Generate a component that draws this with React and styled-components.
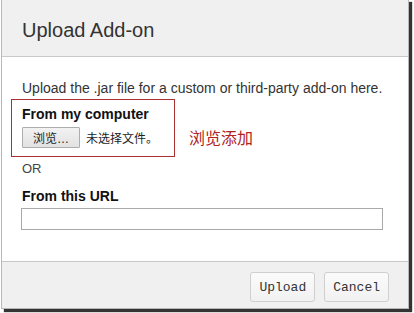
import React from "react";
import styled, { createGlobalStyle } from "styled-components";

const GlobalStyle = createGlobalStyle`
  html, body {
    margin: 0;
    padding: 0;
    background: #ffffff;
  }
  body {
    font-family: "Liberation Sans", Arial, sans-serif;
  }
`;

const App = () => {
  return (
    <>
      <GlobalStyle />
      <Page>
        <Dialog>
          <Header>
            <Title>Upload Add-on</Title>
          </Header>
          <Body>
            <Intro>Upload the .jar file for a custom or third-party add-on here.</Intro>
            <PickRow>
              <Marked>
                <FieldLabel>From my computer</FieldLabel>
                <FileRow>
                  <BrowseBtn type="button">浏览…</BrowseBtn>
                  <FileName>未选择文件。</FileName>
                </FileRow>
              </Marked>
              <Note>浏览添加</Note>
            </PickRow>
            <OrText>OR</OrText>
            <FieldLabel $gap>From this URL</FieldLabel>
            <UrlInput type="text" />
          </Body>
          <Footer>
            <ActionBtn type="button">Upload</ActionBtn>
            <ActionBtn type="button">Cancel</ActionBtn>
          </Footer>
        </Dialog>
      </Page>
    </>
  );
};

export default App;

const Page = styled.div`
  width: 414px;
  height: 313px;
  padding-left: 1px;
  box-sizing: border-box;
  overflow: hidden;
`;

const Dialog = styled.div`
  width: 408px;
  height: 310px;
  margin-top: -1px;
  box-sizing: border-box;
  border: 1px solid #b8b8b8;
  background: #f0f0f0;
  box-shadow: 3px 3px 1px rgba(0, 0, 0, 0.8);
  display: flex;
  flex-direction: column;
`;

const Header = styled.div`
  height: 57px;
  flex: none;
  display: flex;
  align-items: center;
  padding: 4px 0 0 20px;
  box-sizing: border-box;
  background: #f0f0f0;
  border-bottom: 1px solid #c8c8c8;
`;

const Title = styled.h3`
  margin: 0;
  font-size: 20px;
  font-weight: normal;
  color: #333;
`;

const Body = styled.div`
  flex: 1;
  background: #ffffff;
  padding: 23px 0 0 20px;
  display: flex;
  flex-direction: column;
  align-items: flex-start;
  color: #333;
`;

const Intro = styled.p`
  margin: 0;
  font-size: 14px;
  line-height: 17px;
`;

const PickRow = styled.div`
  display: flex;
  align-items: center;
  margin: 2px 0 0 -11px;
`;

const Marked = styled.div`
  width: 164px;
  height: 58px;
  box-sizing: border-box;
  border: 1px solid #a83232;
  padding: 5px 0 0 10px;
`;

const FieldLabel = styled.div`
  margin-top: ${(p) => (p.$gap ? "10px" : "0")};
  font-size: 14px;
  font-weight: bold;
  color: #111;
  line-height: 18px;
`;

const FileRow = styled.div`
  display: flex;
  align-items: center;
  gap: 6px;
  margin-top: 4px;
`;

const BrowseBtn = styled.button`
  width: 58px;
  height: 21px;
  padding: 0;
  border: 1px solid #adadad;
  border-radius: 1px;
  background: linear-gradient(#f2f2f2, #e2e2e2);
  font-family: "Liberation Sans", "Noto Sans CJK SC", sans-serif;
  font-size: 12px;
  color: #222;
`;

const FileName = styled.span`
  font-family: "Liberation Sans", "Noto Sans CJK SC", sans-serif;
  font-size: 12px;
  color: #222;
`;

const Note = styled.span`
  margin-left: 14px;
  margin-top: 18px;
  font-family: "Noto Sans CJK SC", sans-serif;
  font-size: 16px;
  color: #b22222;
`;

const OrText = styled.div`
  margin-top: 4px;
  font-size: 13px;
  line-height: 16px;
  color: #444;
`;

const UrlInput = styled.input`
  margin: 3px 0 0 -1px;
  width: 362px;
  height: 22px;
  box-sizing: border-box;
  border: 1px solid #a9a9a9;
  padding: 0 4px;
`;

const Footer = styled.div`
  height: 47px;
  flex: none;
  box-sizing: border-box;
  border-top: 1px solid #c8c8c8;
  background: #f0f0f0;
  display: flex;
  justify-content: flex-end;
  align-items: flex-start;
  gap: 9px;
  padding: 10px 19px 0 0;
`;

const ActionBtn = styled.button`
  height: 30px;
  padding: 0 8px;
  border: 1px solid #cfcfcf;
  border-radius: 3px;
  background: linear-gradient(#fbfbfb, #f1f1f1);
  font-family: "Liberation Mono", monospace;
  font-size: 13px;
  color: #333;
`;
